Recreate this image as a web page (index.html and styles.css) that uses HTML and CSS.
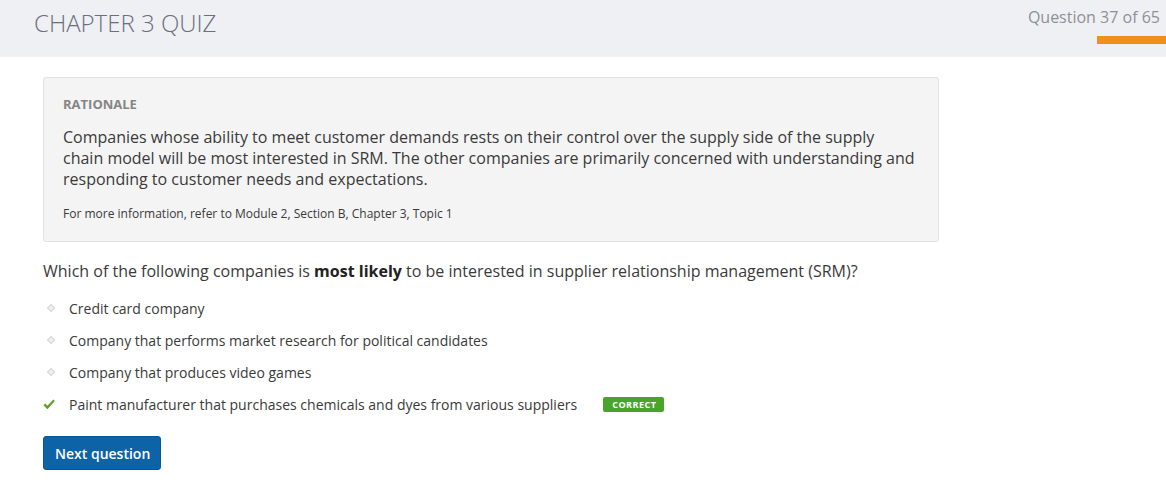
FILE: index.html
```html
<!DOCTYPE html>
<html>
<head>
<meta charset="utf-8">
<link rel="stylesheet" href="styles.css">
</head>
<body>
<header class="topbar">
  <h1 class="title">CHAPTER 3 QUIZ</h1>
  <div class="progress">
    <div class="progress-label">Question 37 of 65</div>
    <div class="progress-bar"></div>
  </div>
</header>
<main class="content">
  <section class="rationale">
    <h2 class="rationale-head">RATIONALE</h2>
    <p class="rationale-body">Companies whose ability to meet customer demands rests on their control over the supply side of the supply chain model will be most interested in SRM. The other companies are primarily concerned with understanding and responding to customer needs and expectations.</p>
    <p class="rationale-ref">For more information, refer to Module 2, Section B, Chapter 3, Topic 1</p>
  </section>
  <p class="question">Which of the following companies is <strong>most likely</strong> to be interested in supplier relationship management (SRM)?</p>
  <ul class="options">
    <li class="option"><span class="mark dot"></span><span>Credit card company</span></li>
    <li class="option"><span class="mark dot"></span><span>Company that performs market research for political candidates</span></li>
    <li class="option"><span class="mark dot"></span><span>Company that produces video games</span></li>
    <li class="option"><span class="mark check"><svg width="12" height="11" viewBox="0 0 12 11"><path d="M0.5 6.2 L2.2 4.6 L4.4 6.8 L10.4 0.6 L11.8 2 L4.4 10.2 Z" fill="#5b9f2b"/></svg></span><span>Paint manufacturer that purchases chemicals and dyes from various suppliers</span><span class="badge">CORRECT</span></li>
  </ul>
  <button class="next">Next question</button>
</main>
</body>
</html>
```
FILE: styles.css
```css
* { box-sizing: border-box; }
html, body { margin: 0; padding: 0; background: #fff; }
body { font-family: "Open Sans", "Liberation Sans", sans-serif; color: #333; }

.topbar {
  height: 57px;
  background: #eff0f4;
  display: flex;
  justify-content: space-between;
  align-items: flex-start;
}
.title {
  margin: 0;
  padding: 7px 0 0 34px;
  font-weight: 300;
  font-size: 24px;
  line-height: 32px;
  color: #6b6e7c;
}
.progress {
  display: flex;
  flex-direction: column;
  align-items: flex-end;
  padding-top: 6px;
}
.progress-label {
  font-size: 16px;
  line-height: 22px;
  color: #8d9099;
  padding-right: 6px;
}
.progress-bar {
  margin-top: 8px;
  width: 69px;
  height: 8px;
  background: #f18f1c;
}

.content { padding: 20px 0 0 43px; }

.rationale {
  width: 896px;
  background: #f4f4f4;
  border: 1px solid #e2e2e2;
  border-radius: 3px;
  padding: 17px 22px 19px 19px;
}
.rationale-head {
  margin: 0;
  font-size: 13px;
  font-weight: 700;
  line-height: 18px;
  color: #858585;
}
.rationale-body {
  margin: 14px 0 0;
  font-size: 16px;
  line-height: 21px;
  color: #3a3a3a;
}
.rationale-ref {
  margin: 15px 0 0;
  font-size: 12px;
  line-height: 17px;
  color: #3a3a3a;
}

.question {
  margin: 18px 0 0;
  font-size: 16px;
  line-height: 22px;
  color: #3a3a3a;
}
.question strong { font-weight: 700; color: #222; }

.options { list-style: none; margin: 10px 0 0; padding: 0; }
.option {
  display: flex;
  align-items: center;
  height: 32px;
  font-size: 14px;
  color: #3a3a3a;
}
.mark {
  width: 26px;
  display: flex;
  align-items: center;
  justify-content: flex-start;
}
.dot::before {
  content: "";
  display: block;
  width: 4px;
  height: 4px;
  margin-left: 5px;
  background: #eeeeee;
  border: 1px solid #d6d6d6;
  transform: rotate(45deg);
}
.check svg { display: block; }
.badge {
  margin-left: 26px;
  background: #47a52a;
  color: #fff;
  font-size: 9px;
  font-weight: 700;
  letter-spacing: 0.5px;
  line-height: 15px;
  padding: 0 8px 0 9px;
  border-radius: 2px;
}

.next {
  margin-top: 16px;
  height: 34px;
  padding: 0 10px 0 11px;
  background: #0e63a6;
  color: #fff;
  border: 1px solid #0b5590;
  border-radius: 3px;
  font-family: "Open Sans", "Liberation Sans", sans-serif;
  font-size: 14px;
  font-weight: 600;
}
```
